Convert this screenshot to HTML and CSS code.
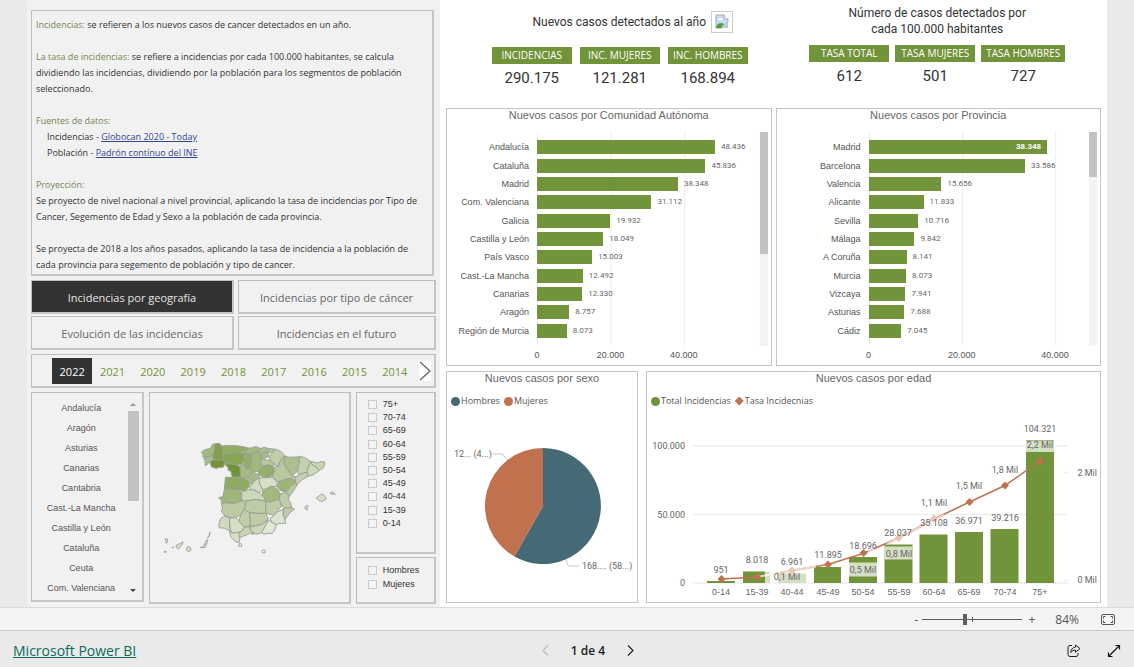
FILE: index.html
```
<!DOCTYPE html>
<html lang="es">
<head>
<meta charset="utf-8">
<meta name="viewport" content="width=device-width, initial-scale=1">
<title>Incidencias por geografía</title>
<link rel="stylesheet" href="styles.css">
</head>
<body>
<main class="stage">
  <div class="report">
    <section class="side">
      <article class="box notes">
        <p><b>Incidencias:</b> se refieren a los nuevos casos de cancer detectados en un año.</p>
        <p><b>La tasa de incidencias:</b> se refiere a incidencias por cada 100.000 habitantes, se calcula<br>dividiendo las incidencias, dividiendo por la población para los segmentos de población<br>seleccionado.</p>
        <p><b>Fuentes de datos:</b></p>
        <ul>
          <li>Incidencias - <a href="#globocan">Globocan 2020 - Today</a></li>
          <li>Población - <a href="#ine">Padrón contínuo del INE</a></li>
        </ul>
        <p><b>Proyección:</b><br>Se proyecto de nivel nacional a nivel provincial, aplicando la tasa de incidencias por Tipo de<br>Cancer, Segemento de Edad y Sexo a la población de cada provincia.</p>
        <p>Se proyecta de 2018 a los años pasados, aplicando la tasa de incidencia a la población de<br>cada provincia para segemento de población y tipo de cancer.</p>
      </article>

      <nav class="tabs">
        <button class="box tab active">Incidencias por geografía</button>
        <button class="box tab">Incidencias por tipo de cáncer</button>
        <button class="box tab">Evolución de las incidencias</button>
        <button class="box tab">Incidencias en el futuro</button>
      </nav>

      <div class="box years">
        <div class="year-list">
          <button class="active">2022</button><button>2021</button><button>2020</button><button>2019</button><button>2018</button><button>2017</button><button>2016</button><button>2015</button><button>2014</button>
        </div>
        <button class="next" aria-label="Más años"><svg width="12" height="20" viewBox="0 0 12 20"><path d="M1 1l10 9-10 9" fill="none" stroke="#666" stroke-width="1.3"/></svg></button>
      </div>

      <div class="filters">
        <div class="box regions">
          <div class="region-list">
            <button>Andalucía</button><button>Aragón</button><button>Asturias</button><button>Canarias</button><button>Cantabria</button><button>Cast.-La Mancha</button><button>Castilla y León</button><button>Cataluña</button><button>Ceuta</button><button>Com. Valenciana</button>
          </div>
          <div class="list-scroll"><i class="up"></i><i class="thumb"></i><i class="down"></i></div>
        </div>

        <div class="box map">
          <svg viewBox="0 0 600 408" role="img" aria-label="Mapa de España por provincia" stroke="#9b9e96" stroke-width="2.8" stroke-linejoin="round">
            <path fill="#a3b97f" d="M155 68l7-7 8-3 13-2 3-8 5-6 5 0-1 18-5 18-10 2-15 4-7-4 3-5z"/>
            <path fill="#a9be88" d="M165 84l15-4 10-2 2 12-9 5-5 5-6 5-6 3 2-7-3-3 3-5-5-4z"/>
            <path fill="#7fa04d" d="M196 42l10-2 7 3 5 7 3 20 1 18-12 4-18-2-2-12 5-18z"/>
            <path fill="#72953a" d="M183 95l9-5 18 2 12-4 4 12-4 12-17 2-4 3-8-4-5 1-5-10z"/>
            <path fill="#8fad63" d="M218 48l20-1 19 0 23 3 20 5-15 11-23 2-22 4-19 2z"/>
            <path fill="#86a656" d="M221 74l19-2 22-4 23 2-1 20-4 12-18 4-22-4-14 2-4-16z"/>
            <path fill="#a3ba80" d="M300 55l10-2 10-3 15 6-10 10-17 6-23-2v-4z"/>
            <path fill="#93af69" d="M285 70l23 2-3 23-2 20-13 3-6-13v-15z"/>
            <path fill="#6f9438" d="M226 104l14-2 22 4 10 4 2 32-24 1-4-8-1-10-9-3v-9z"/>
            <path fill="#a5bb83" d="M272 108l8-6 4 3 6 13 13-3 7 13-10 12-15 8-11-6z"/>
            <path fill="#a1b87c" d="M308 72l17-6 13 8-3 21 5 15-12 15-18 3-7-13 2-20z"/>
            <path fill="#aabf8b" d="M335 56l10-4 13 4-3 12-15 2-15-4z"/>
            <path fill="#b3c698" d="M358 56l20 2-8 12-15-2z"/>
            <path fill="#a8bd88" d="M340 70l15-2 7 12-17 5 3 5-11-2 1-14z"/>
            <path fill="#b9c99f" d="M337 88l11 2 14 2 16 11-6 7-17-5-15 5-5-15z"/>
            <path fill="#c0cfaa" d="M378 58l17 6 12 13-12 13-7 20-10-7-16-11v-12l8-10z"/>
            <path fill="#93af69" d="M340 110l15-5 17 5 4 15-6 13-22 6-20-9v-10z"/>
            <path fill="#a5bb83" d="M300 140l10-12 18 7 2 9-12 8-13 12-5-4-9-10z"/>
            <path fill="#8cab60" d="M228 143h22l24-1 11 6-9 12-8 20-28-2h-15z"/>
            <path fill="#8cab60" d="M285 148l6 2 9 10v12l-15 13-17-5 8-20z"/>
            <path fill="#b8c99e" d="M407 80l-2 18 7 17 18 23 11 4-21 6-30 9-20-13v-6l6-13 2-15h10l7-20z"/>
            <path fill="#abc08c" d="M407 78l11 4 12 0 22-1-2 24-5 20-15 13-18-23-7-17z"/>
            <path fill="#c3d1ae" d="M452 80l12 2 11 6 10 7-7 20-3 13-10 2-15 5-5-10 5-20z"/>
            <path fill="#c6d4b4" d="M485 95l9 1 11 4 12-5 11 2v8l-4 9-12 8-12-10-10-7z"/>
            <path fill="#ccd8ba" d="M485 95l5 10 10 7 12 10-17 13-17 5-3-12 3-13z"/>
            <path fill="#c3d1ae" d="M450 135l15-5 10-2 3 12-18 10-7 7-8 8-7-10 3-13z"/>
            <path fill="#9db577" d="M390 155l30-9 19 4-1 12-13 8-15 18-18-6-8-12z"/>
            <path fill="#d6dfc8" d="M330 145l18-1 22-1 14 15v14l-19-2-13 8-12 2-10-20z"/>
            <path fill="#d1dcc1" d="M330 145v15l10 20-10 10-15-8-13-2 3-12 13-16z"/>
            <path fill="#a2b97e" d="M340 185l12-7 13-8 19 8 10 14-4 16-25 10-15-3-10-15z"/>
            <path fill="#9fb67a" d="M225 178h15l28 2 8 10 2 24-23 8-27-2-12 2-1-12-8-5 13-4z"/>
            <path fill="#ccd8bb" d="M276 187l26-7 13 2 15 8 12 10 8 15-30-5-20 3-22 1z"/>
            <path fill="#bccba3" d="M216 222l12-2 27 2 23-8 12 8-5 18-10 15-15 10h-20l-15-7-10-13 4-8z"/>
            <path fill="#bccca5" d="M290 215l30-5 30 5v10l-1 27-29 0-25-4-10-8z"/>
            <path fill="#bdcca6" d="M350 215l15 3 25-10 8 22-13 15-10 13-25-6z"/>
            <path fill="#b7c89c" d="M410 188l15-18 13-10 7 6-15 24-9 10z"/>
            <path fill="#bfcea8" d="M394 194l16-6 11 12-3 10 7 10 3 16-23-1-9-13-6-14z"/>
            <path fill="#bdcca6" d="M402 240l3-5 23 1 9 3-15 12-6 8-8 12-6-13z"/>
            <path fill="#dde5d2" d="M375 258l10-10 17-8v18l6 13 2 11-20 0-8 4-12-6-7-12z"/>
            <path fill="#c0ceaa" d="M275 255l10-15 15 9 3 20v22l-18 2-17-17z"/>
            <path fill="#becca7" d="M300 250l20 2 30 0 8 16-18 17-22 5-15 0v-21z"/>
            <path fill="#cbd7b9" d="M303 292l15-2 22-5 17-14-5 19-11 20-20 5-18-12z"/>
            <path fill="#dfe7d5" d="M358 272l12 8 12 6-5 16-8 11-11-1-15 3-4-7z"/>
            <path fill="#cfdabf" d="M213 268l12-8 15 5v20l3 20-17-8-17-2-1-10z"/>
            <path fill="#d6dfc8" d="M240 265h20l8 11 17 17-7 14-28 5-7-10z"/>
            <path fill="#c8d5b5" d="M278 305l7-12h18v10l12 12-15-2-18 8-12 5-3-12z"/>
            <path fill="#d4dec5" d="M240 307l10 5 20-4-1 12 3 8-3 13-9-3-13-11-4-8z"/>
            <g fill="#d6dfc8" stroke-width="2.6">
              <path d="M502 206l16-12 8 3 7 11-13 9-10-4z"/>
              <path d="M544 190l8-3 8 7-12 0z"/>
              <path d="M468 233l8-6 3 3-4 5 1 6-7-3z"/>
              <path d="M46 329l7 1 0 8-4 5z"/>
              <path d="M79 349l21-11-3 9-6 6-4 7-7-5z"/>
              <circle cx="117" cy="360" r="7"/>
              <circle cx="69" cy="355" r="2"/>
              <path d="M42 368l6-2 1 3-6 1z"/>
              <path d="M152 356l10-5 8-17 5-3-4 13-4 11z"/>
              <path d="M173 325l7-5 1-12-3 15z"/>
            </g>
            <path fill="#fff" d="M269 344h8v8h-8zM339 363h9v8h-9z"/>
          </svg>
        </div>

        <div class="checks">
          <fieldset class="box ages" aria-label="Edad">
            <label><input type="checkbox">75+</label>
            <label><input type="checkbox">70-74</label>
            <label><input type="checkbox">65-69</label>
            <label><input type="checkbox">60-64</label>
            <label><input type="checkbox">55-59</label>
            <label><input type="checkbox">50-54</label>
            <label><input type="checkbox">45-49</label>
            <label><input type="checkbox">40-44</label>
            <label><input type="checkbox">15-39</label>
            <label><input type="checkbox">0-14</label>
          </fieldset>
          <fieldset class="box sexes" aria-label="Sexo">
            <label><input type="checkbox">Hombres</label>
            <label><input type="checkbox">Mujeres</label>
          </fieldset>
        </div>
      </div>
    </section>

    <section class="content">
      <header class="kpis">
        <div class="kpi-group cases">
          <h2>Nuevos casos detectados al año
            <span class="picture"><svg width="16" height="16" viewBox="0 0 16 16"><path d="M2 1h8l4 4v3l-3 3-3 3H2z" fill="#c9dcf5" stroke="#a3abb5"/><path d="M10 1v4h4" fill="#fff" stroke="#a3abb5"/><path d="M4 6q0-2 2-2 3 0 3 2z" fill="#fff"/><path d="M2 13q3-6 8-3l-3 4H2z" fill="#4ba33c"/><path d="M14 9v5H9z" fill="#aec9e4"/></svg></span>
          </h2>
          <dl>
            <div><dt>INCIDENCIAS</dt><dd>290.175</dd></div>
            <div><dt>INC. MUJERES</dt><dd>121.281</dd></div>
            <div><dt>INC. HOMBRES</dt><dd>168.894</dd></div>
          </dl>
        </div>
        <div class="kpi-group rates">
          <h2>Número de casos detectados por<br>cada 100.000 habitantes</h2>
          <dl>
            <div><dt>TASA TOTAL</dt><dd>612</dd></div>
            <div><dt>TASA MUJERES</dt><dd>501</dd></div>
            <div><dt>TASA HOMBRES</dt><dd>727</dd></div>
          </dl>
        </div>
      </header>

      <div class="row halves">
        <figure class="card bar-chart communities">
          <h3>Nuevos casos por Comunidad Autónoma</h3>
          <div class="chart-body">
            <div class="names"><span>Andalucía</span><span>Cataluña</span><span>Madrid</span><span>Com. Valenciana</span><span>Galicia</span><span>Castilla y León</span><span>País Vasco</span><span>Cast.-La Mancha</span><span>Canarias</span><span>Aragón</span><span>Región de Murcia</span></div>
            <div class="bars">
              <div><i style="width:80.7%"></i><span>48.436</span></div>
              <div><i style="width:76.4%"></i><span>45.836</span></div>
              <div><i style="width:63.9%"></i><span>38.348</span></div>
              <div><i style="width:51.9%"></i><span>31.112</span></div>
              <div><i style="width:33.2%"></i><span>19.932</span></div>
              <div><i style="width:30.1%"></i><span>18.049</span></div>
              <div><i style="width:25%"></i><span>15.003</span></div>
              <div><i style="width:20.8%"></i><span>12.492</span></div>
              <div><i style="width:20.5%"></i><span>12.330</span></div>
              <div><i style="width:14.6%"></i><span>8.757</span></div>
              <div><i style="width:13.5%"></i><span>8.073</span></div>
            </div>
            <div class="track"><i></i></div>
            <div class="ticks"><span>0</span><span>20.000</span><span>40.000</span></div>
          </div>
        </figure>
        <figure class="card bar-chart provinces">
          <h3>Nuevos casos por Provincia</h3>
          <div class="chart-body">
            <div class="names"><span>Madrid</span><span>Barcelona</span><span>Valencia</span><span>Alicante</span><span>Sevilla</span><span>Málaga</span><span>A Coruña</span><span>Murcia</span><span>Vizcaya</span><span>Asturias</span><span>Cádiz</span></div>
            <div class="bars">
              <div><i style="width:81.8%"><b>38.348</b></i></div>
              <div><i style="width:71.6%"></i><span>33.586</span></div>
              <div><i style="width:33.4%"></i><span>15.656</span></div>
              <div><i style="width:25.2%"></i><span>11.833</span></div>
              <div><i style="width:22.8%"></i><span>10.716</span></div>
              <div><i style="width:21%"></i><span>9.842</span></div>
              <div><i style="width:17.4%"></i><span>8.141</span></div>
              <div><i style="width:17.2%"></i><span>8.073</span></div>
              <div><i style="width:16.9%"></i><span>7.941</span></div>
              <div><i style="width:16.4%"></i><span>7.688</span></div>
              <div><i style="width:15%"></i><span>7.045</span></div>
            </div>
            <div class="track"><i></i></div>
            <div class="ticks"><span>0</span><span>20.000</span><span>40.000</span></div>
          </div>
        </figure>
      </div>

      <div class="row thirds">
        <figure class="card">
          <h3>Nuevos casos por sexo</h3>
          <div class="legend"><span><i class="teal"></i>Hombres</span><span><i class="rust"></i>Mujeres</span></div>
          <svg class="chart" viewBox="447 408 190 194" role="img" aria-label="Nuevos casos por sexo">
            <path fill="#466a75" d="M543 506V448A58 58 0 1 1 514.4 556.5z"/>
            <path fill="#c0714d" d="M543 506V448A58 58 0 0 0 514.4 556.5z"/>
            <path d="M493 454h9.500l5 6M566 560l2.500 6H579" fill="none" stroke="#c4c4c4"/>
            <text class="value" x="454" y="457">12... (4...)</text>
            <text class="value" x="582" y="569">168.... (58...)</text>
          </svg>
        </figure>
        <figure class="card">
          <h3>Nuevos casos por edad</h3>
          <div class="legend"><span><i class="green"></i>Total Incidencias</span><span><i class="diamond"></i>Tasa Incidecnias</span></div>
          <svg class="chart" viewBox="647 408 453 194" role="img" aria-label="Nuevos casos por edad">
            <path d="M693 446H1068M693 514.500H1068M693 583H1068M1063 472.500h6M1063 580.500h6" stroke="#eeeeee" stroke-width="1.500"/>
            <g fill="#719339">
              <path d="M707 581h28v2h-28zM743 571.500h27v11.500h-27zM814 567h27v16h-27zM849 557h28v26h-28zM884.500 544.500h28v38.500h-28zM919.500 534.500h28v48.500h-28zM955 532h28v51h-28zM990.500 529h28v54h-28zM1026 440h28v143h-28z"/>
              <path fill="#d5dfc4" d="M778 573.500h28v9.500h-28z"/>
            </g>
            <path d="M721.500 579l35.500-2 35-6.500 36-6 35-11 35.500-15.500 35.500-19 35.500-17 35.500-16.500L1040 461" fill="none" stroke="#c0714d" stroke-width="1.500"/>
            <path d="M757 577l35-6.500 24-4M868 551l8-3M887 544l47-24 10-5" stroke="#efd5c9" stroke-width="2" fill="none"/>
            <g fill="#c0714d">
              <path d="M721.500 575l4 4-4 4-4-4zM757 573l4 4-4 4-4-4zM828 560.500l4 4-4 4-4-4zM863.500 549l4 4-4 4-4-4zM969.500 498l4 4-4 4-4-4zM1005 481.500l4 4-4 4-4-4zM1040 457l4 4-4 4-4-4z"/>
              <path fill="#e8c4b3" d="M792 566.500l4 4-4 4-4-4zM898.500 534l4 4-4 4-4-4zM934 514.500l4 4-4 4-4-4z"/>
            </g>
            <g fill="#fff" fill-opacity=".7">
              <path d="M765 571h12v12h-12zM849 562.500h28v14h-28zM884.500 546.500h28v13h-28zM1026 440.500h28v11.500h-28z"/>
            </g>
            <g class="value" text-anchor="middle">
              <text x="721" y="573">951</text><text x="757" y="563">8.018</text><text x="792" y="565">6.961</text><text x="828" y="558">11.895</text><text x="863" y="549">18.696</text><text x="898" y="536">28.037</text><text x="934" y="526">35.108</text><text x="969" y="524">36.971</text><text x="1005" y="521">39.216</text><text x="1040" y="432">104.321</text>
              <text x="787" y="580">0,1 Mil</text><text x="863" y="573">0,5 Mil</text><text x="899" y="557">0,8 Mil</text><text x="934" y="506">1,1 Mil</text><text x="969" y="489">1,5 Mil</text><text x="1005" y="473">1,8 Mil</text><text x="1040" y="448">2,2 Mil</text>
            </g>
            <g class="axis" text-anchor="middle">
              <text x="721" y="595">0-14</text><text x="757" y="595">15-39</text><text x="792" y="595">40-44</text><text x="828" y="595">45-49</text><text x="863" y="595">50-54</text><text x="899" y="595">55-59</text><text x="934" y="595">60-64</text><text x="969" y="595">65-69</text><text x="1005" y="595">70-74</text><text x="1040" y="595">75+</text>
            </g>
            <g class="value" text-anchor="end">
              <text x="685" y="449">100.000</text><text x="685" y="518">50.000</text><text x="685" y="586">0</text><text x="1097" y="476">2 Mil</text><text x="1097" y="583">0 Mil</text>
            </g>
          </svg>
        </figure>
      </div>
    </section>
  </div>
</main>

<div class="zoom-bar">
  <button aria-label="Reducir">-</button>
  <input type="range" min="0" max="100" value="42" aria-label="Zoom">
  <button aria-label="Ampliar">+</button>
  <output>84%</output>
  <button class="fit" aria-label="Ajustar a la página"><svg width="14" height="11" viewBox="0 0 14 11" fill="none" stroke="#555"><rect x=".5" y=".5" width="13" height="10" rx="1.500"/><path d="M2.500 4.500v-2h2M9.500 2.500h2v2M11.500 6.500v2h-2M4.500 8.500h-2v-2"/></svg></button>
</div>

<footer class="status">
  <a class="brand" href="#powerbi">Microsoft Power BI</a>
  <div class="pager">
    <button aria-label="Página anterior" disabled><svg width="8" height="11" viewBox="0 0 8 11"><path d="M6 .5l-5 5 5 5" fill="none" stroke="#bdbdbd" stroke-width="1.200"/></svg></button>
    <span>1 de 4</span>
    <button aria-label="Página siguiente"><svg width="8" height="11" viewBox="0 0 8 11"><path d="M2 .5l5 5-5 5" fill="none" stroke="#222" stroke-width="1.200"/></svg></button>
  </div>
  <div class="actions">
    <button aria-label="Compartir"><svg width="14" height="14" viewBox="0 0 14 14" fill="none" stroke="#222" stroke-linejoin="round"><path d="M5 1.500H3a2 2 0 0 0-2 2v7a2 2 0 0 0 2 2h6a2 2 0 0 0 2-2V9"/><path d="M8.500 1l4.500 3.600-4.500 3.700V6.100C6.500 6 5 6.800 3.800 8.500 4 5.300 5.600 3.400 8.500 3.100z"/></svg></button>
    <button aria-label="Pantalla completa"><svg width="14" height="14" viewBox="0 0 14 14" fill="none" stroke="#111" stroke-width="1.200"><path d="M1.500 12.500l11-11M8.500 1.500h4v4M1.500 8.500v4h4"/></svg></button>
  </div>
</footer>
</body>
</html>
```
FILE: styles.css
```
* { box-sizing: border-box; }

body {
  margin: 0;
  min-height: 100vh;
  display: flex;
  flex-direction: column;
  background: #eaeaea;
  color: #333;
  font-family: "Open Sans", "Noto Sans", sans-serif;
}

h2, h3, p, ul, dl, dd, figure, fieldset { margin: 0; padding: 0; }
h2, h3 { font-weight: 400; }
ul { list-style: none; }

button {
  margin: 0;
  padding: 0;
  border: 0;
  background: none;
  color: inherit;
  font: inherit;
  cursor: pointer;
}

svg { display: block; }

.stage { flex: 1; padding: 0 27px; }

.report {
  display: grid;
  grid-template-columns: 413fr 667fr;
  height: 100%;
}

/* Left panel */
.side {
  display: flex;
  flex-direction: column;
  gap: 4px;
  padding: 10px 4px 3px;
  background: #f1f1f1;
  min-width: 0;
}

.box { border: 2px solid #c4c4c4; border-width: 1px 2px 2px 1px; border-color: #bdbdbd #c6c6c6 #c6c6c6 #bdbdbd; }

.notes {
  margin-right: 2px;
  padding: 6px 4px 1px;
  font: 9px/16px "Open Sans", "Noto Sans", sans-serif;
  white-space: nowrap;
}
.notes p { margin-bottom: 16px; }
.notes p:nth-of-type(3), .notes p:last-child { margin-bottom: 0; }
.notes ul { margin: 0 0 16px 11px; }
.notes b { color: #728853; font-weight: 400; }
.notes a { color: #33478f; }

.tabs { display: grid; grid-template-columns: 203fr 198fr; gap: 2px 4px; }
.tab { height: 34px; padding-top: 2px; font-size: 11px; color: #666; }
.tab.active { background: #333; color: #e6e6e6; }

.years { display: flex; align-items: center; justify-content: space-between; height: 34px; padding: 0 3px 0 20px; }
.year-list { flex: 1; display: grid; grid-template-columns: repeat(9, 1fr); margin-right: 4px; }
.year-list button { height: 26px; padding-top: 2px; font-size: 11px; color: #719339; }
.year-list .active { background: #333; color: #fff; }
.next { background: #fff; }

.filters { display: grid; grid-template-columns: 113fr 201fr 80fr; gap: 5px; flex: 1; }
.regions { display: flex; justify-content: space-between; margin-bottom: 2px; padding: 5px 3px 2px 0; }
.region-list { flex: 1; display: grid; grid-auto-rows: 1fr; }
.region-list button { padding-left: 3px; font: 9px/20px "Liberation Sans", Arial, sans-serif; color: #555; }
.list-scroll { width: 12px; display: flex; flex-direction: column; align-items: center; padding: 5px 0 6px; }
.list-scroll .up, .list-scroll .down { border: 3px solid transparent; border-top: 0; border-bottom-color: #999; }
.list-scroll .down { border: 3px solid transparent; border-bottom: 0; border-top-color: #444; margin-top: auto; }
.list-scroll .thumb { width: 11px; height: 90px; margin-top: 5px; background: #c2c2c2; }
.map { display: flex; align-items: center; }
.map svg { width: 100%; }

.checks { display: flex; flex-direction: column; gap: 3px; }
.ages { flex: 1; display: grid; grid-auto-rows: 1fr; padding-top: 5px; padding-bottom: 22px; }
.sexes { height: 47px; padding-top: 5px; }
.ages, .sexes { min-width: 0; padding-left: 11px; font: 9px/13px "Liberation Sans", Arial, sans-serif; color: #333; }
.checks label { display: flex; align-items: center; gap: 6px; }
.sexes label { min-height: 14px; }
.checks input { appearance: none; width: 9px; height: 9px; margin: 0; border: 1px solid #cbcbcb; background: #f4f4f4; }

/* Right panel */
.content { background: #fff; padding: 0 6px 3px; min-width: 0; }
.kpis { display: grid; grid-template-columns: 1fr 1fr; height: 108px; padding: 0 6px; }
.kpi-group { display: flex; flex-direction: column; align-items: center; }
.kpi-group h2 { display: flex; align-items: center; gap: 5px; height: 47px; padding-bottom: 4px; font: 12px/16px Roboto, sans-serif; text-align: center; }
.cases { padding-left: 14px; }
.cases h2 { padding-left: 26px; }
.picture { padding: 2px; border: 1px solid #ccc; }
.kpi-group dl { display: flex; gap: 8px; text-align: center; }
.kpi-group dt { min-width: 80px; padding: 0 5px; background: #719339; color: #fff; font-size: 10px; line-height: 17px; }
.kpi-group dd { font: 15px/28px Roboto, sans-serif; }
.rates { padding-left: 6px; }
.rates h2 { height: 45px; }
.rates dl { gap: 6px; }

.row { display: grid; }
.halves { grid-template-columns: 1fr 1fr; gap: 4px; margin-bottom: 5px; }
.thirds { grid-template-columns: 192fr 455fr; gap: 8px; }
.card { border: 1px solid #c4c4c4; min-width: 0; }
.card h3 { font: 11px/13px "Liberation Sans", Arial, sans-serif; color: #666; text-align: center; }

.chart-body {
  display: grid;
  grid-template: "names bars track" 214px ". ticks ." 19px / var(--names) 1fr 8px;
  column-gap: 2px;
  padding: 10px 3px 0 0;
  color: #555;
  font: 9px/14px "Liberation Sans", Arial, sans-serif;
}
.names { grid-area: names; display: grid; grid-auto-rows: 1fr; align-items: center; padding: 6px 6px 6px 0; text-align: right; }
.bars {
  grid-area: bars;
  display: grid;
  grid-auto-rows: 1fr;
  align-items: center;
  padding: 6px 0;
  background: linear-gradient(to right, #ededed 1px, transparent 1px) 0 0 / var(--step) 100%;
}
.bars div { display: flex; align-items: center; gap: 6px; font: 8px/14px Roboto, sans-serif; color: #666; }
.bars i { flex: none; height: 14px; background: #719339; text-align: right; font-style: normal; }
.bars b { padding-right: 6px; color: #fff; }
.track { grid-area: track; background: #f3f3f3; }
.track i { display: block; height: 57%; background: #c2c2c2; }
.provinces .track i { height: 21%; }
.ticks { grid-area: ticks; display: grid; grid-template-columns: var(--step) var(--step) 1fr; padding-top: 2px; }
.ticks span { width: 0; display: flex; justify-content: center; }
.communities { --step: 33.3%; --names: 88px; }
.provinces { --step: 42.7%; --names: 90px; }

.legend { display: flex; gap: 4px; padding: 9px 4px 0; font-size: 9px; line-height: 14px; color: #555; }
.legend span { display: flex; align-items: center; gap: 1px; }
.legend i { width: 9px; height: 9px; border-radius: 50%; }
.teal { background: #466a75; }
.rust { background: #c0714d; }
.green { background: #719339; }
.legend .diamond { background: #c0714d; border-radius: 0; clip-path: polygon(50% 0, 100% 50%, 50% 100%, 0 50%); }
.chart { width: 100%; }
.value { font: 9px Roboto, sans-serif; fill: #666; }
.axis { font: 9px "Liberation Sans", Arial, sans-serif; fill: #666; }

/* Zoom and status bars */
.zoom-bar {
  display: flex;
  justify-content: flex-end;
  align-items: center;
  height: 23px;
  padding-right: 19px;
  background: #f4f4f4;
  border-top: 1px solid #dcdcdc;
  color: #555;
  font-size: 12px;
}
.zoom-bar input {
  appearance: none;
  width: 100px;
  height: 11px;
  margin: 0 6px 0 4px;
  background:
    linear-gradient(#605e5c, #605e5c) 50% 50% / 1px 5px no-repeat,
    linear-gradient(#605e5c, #605e5c) 0 50% / 100% 1px no-repeat;
}
.zoom-bar input::-webkit-slider-thumb { appearance: none; width: 4px; height: 11px; background: #605e5c; }
.zoom-bar output { margin: 0 22px 0 20px; }

.status {
  display: grid;
  grid-template-columns: 1fr auto 1fr;
  align-items: center;
  height: 37px;
  padding: 3px 13px 0;
  border-top: 1px solid #c8c8c8;
  background: #eaeaea;
}
.brand { color: #0b6a5c; font-size: 14px; justify-self: start; }
.pager { display: flex; align-items: center; gap: 21px; margin-left: 42px; font-size: 12px; font-weight: 600; color: #222; }
.actions { display: flex; justify-content: flex-end; gap: 26px; }
```
